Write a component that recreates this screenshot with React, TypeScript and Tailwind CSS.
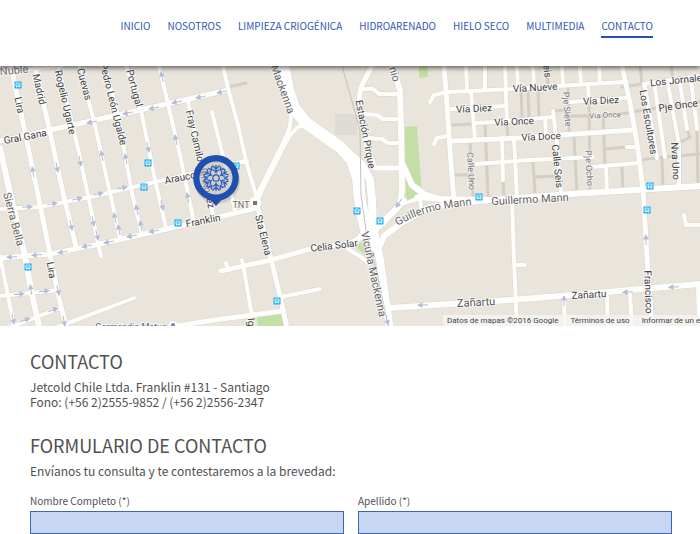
import React from 'react';

type Road = [width: number, points: string];
type Arrow = [x: number, y: number, angle: number];

interface MapLabel {
    text: string;
    x: number;
    y: number;
    angle: number;
    size?: number;
    color?: string;
}

const navItems = [
    { label: 'INICIO', href: '#inicio' },
    { label: 'NOSOTROS', href: '#nosotros' },
    { label: 'LIMPIEZA CRIOGÉNICA', href: '#limpieza' },
    { label: 'HIDROARENADO', href: '#hidroarenado' },
    { label: 'HIELO SECO', href: '#hielo-seco' },
    { label: 'MULTIMEDIA', href: '#multimedia' },
    { label: 'CONTACTO', href: '#contacto', active: true },
];

// Passages, drawn below the streets
const lanes: Road[] = [
    [3, '228,87 246,83'],
    [3, '452,125 472,124'],
    [3, '485,124 488,196'],
    [3, '455,175 472,175'],
    [3, '470,142 473,197'],
    [3, '521,90 522,117'],
    [3, '507,123 508,138'],
    [3, '503,180 504,197'],
    [3, '568,86 569,133'],
    [3, '553,111 569,110'],
    [3, '568,116 590,116 628,113'],
    [3, '589,103 590,190'],
    [3, '603,115 605,166'],
    [3, '574,136 577,193'],
    [3, '533,162 535,193'],
    [3, '535,177 556,176'],
    [3, '622,167 623,190'],
    [3, '605,149 627,147'],
    [3, '528,90 529,117'],
    [3, '538,90 539,117'],
    [3, '547,66 548,87'],
    [3, '622,87 642,84 640,66'],
    [3, '671,66 673,79'],
    [3, '632,112 655,108 700,102'],
    [3, '640,160 665,157 700,154'],
    [3, '662,160 663,188'],
    [3, '687,130 690,137 679,143'],
    [3, '697,130 698,186'],
];

const streets: Road[] = [
    [4, '0,72 30,69 62,66'],
    [5, '11,66 25,132 38,195 50,254 57,290 66,326'],
    [5, '35,66 50,132 63,193 76,247'],
    [4, '58,66 75,135 88,195 98,243 101,256'],
    [4, '79,66 94,121 110,193 120,238'],
    [4, '105,66 118,116 132,193 142,234'],
    [4, '126,66 141,110 155,180 166,228'],
    [4, '159,66 168,104 180,155 194,222'],
    [5, '0,141 50,130 118,115 180,101 228,90'],
    [4, '0,209 40,207 90,197 155,182 207,170'],
    [5, '0,258 25,256 50,254 100,244 180,226 257,208'],
    [6, '0,148 10,193 25,256 31,290 39,326'],
    [4, '0,256 14,326'],
    [4, '0,296 31,293 57,290'],
    [4, '8,328 60,308'],
    [4, '55,328 134,298'],
    [4, '223,66 228,88 238,125 247,165 256,195 258,208'],
    [4, '188,101 197,145 208,190 213,215'],
    [4, '212,112 224,160 235,211'],
    [4, '236,163 247,161'],
    [4, '291,114 290,127 281,147 257,195 256,203'],
    [4, '306,125 298,127 290,135 282,150 262,190 256,205'],
    [5, '258,208 271,259 281,300 287,328'],
    [5, '221,271 271,260 310,249 350,243 364,236'],
    [4, '226,263 228,269'],
    [4, '242,260 244,270 252,316'],
    [4, '281,297 320,289'],
    [5, '170,327 215,320 283,311'],
    [5, '372,66 361,87 359,100 362,118 366,145 375,168 402,168'],
    [4, '361,89 373,89 379,94 400,94'],
    [4, '365,114 377,115 383,119 400,119'],
    [4, '369,138 382,139 388,143 401,143'],
    [6, '392,66 400,90 401,130 402,190 400,205 384,222 374,231'],
    [5, '444,66 447,105 450,150 454,202'],
    [4, '447,92 434,95 430,102'],
    [4, '447,136 437,138 434,144'],
    [4, '447,92 513,89 557,86 623,82'],
    [4, '451,109 505,106'],
    [4, '475,123 495,122 533,119 553,117'],
    [5, '451,141 520,138 560,135 633,130'],
    [4, '475,164 530,160 593,157'],
    [4, '592,167 638,163'],
    [4, '466,66 467,90'],
    [4, '485,66 485,89'],
    [4, '471,92 475,139'],
    [4, '505,66 507,123'],
    [4, '502,138 503,180'],
    [4, '514,138 517,198'],
    [4, '517,66 518,88'],
    [4, '533,66 534,86'],
    [4, '562,66 563,85'],
    [4, '580,66 581,84'],
    [4, '599,66 600,82'],
    [4, '588,84 589,101'],
    [4, '570,102 625,98'],
    [4, '553,111 557,145 561,194'],
    [4, '545,119 546,134'],
    [4, '627,147 637,147'],
    [4, '606,167 607,192'],
    [5, '622,66 630,103 637,143 643,190 648,273 652,328'],
    [4, '645,88 644,84 700,76'],
    [4, '645,87 657,158'],
    [4, '655,88 665,157'],
    [4, '668,84 679,145 679,187'],
    [4, '680,83 687,129'],
    [4, '691,81 697,129'],
    [4, '512,200 514,260 517,328'],
    [4, '516,265 525,265'],
    [6, '389,308 450,304 510,300 560,296 700,284'],
    [4, '564,298 565,328'],
    [4, '607,296 608,328'],
    [4, '630,294 632,328'],
    [4, '698,286 699,328'],
    [4, '684,215 686,225 700,225'],
    [4, '453,190 454,200'],
    [4, '420,196 421,209'],
];

const avenues: Road[] = [
    [12, '283,62 288,90 294,108 306,123 340,147 352,160 358,178 360,200 365,226 376,246'],
    [8, '345,150 362,165 370,180 372,200 373,226 380,260 390,330'],
    [6, '403,165 412,185 424,194 440,199 490,200 570,194 700,186'],
    [6, '374,230 392,213 403,202 420,197 440,199'],
    [6, '378,250 384,236 400,224 430,207 460,203 490,200'],
    [4, '348,249 361,257 369,264'],
    [4, '355,243 364,230'],
];

const arrows: Arrow[] = [
    [33, 172, -100], [57, 167, 78], [80, 161, 78], [102, 156, -102], [126, 159, -102],
    [148, 147, 78], [162, 77, -102], [176, 140, -102], [92, 122, 168], [128, 113, 168],
    [154, 108, 168], [177, 102, 168], [122, 188, -12], [98, 194, -12], [27, 207, -3],
    [52, 204, -10], [77, 199, -12], [71, 225, 78], [93, 221, 78], [97, 235, 78],
    [115, 218, -102], [119, 230, -102], [137, 210, -102], [141, 226, -102], [162, 205, 78],
    [12, 257, 177], [37, 255, 175], [63, 252, 170], [87, 246, 168], [109, 242, 168],
    [132, 236, 168], [154, 231, 168], [19, 294, -5], [44, 291, -5], [31, 290, -100],
    [58, 290, 78], [53, 310, -20], [25, 320, -20], [13, 319, 78], [64, 321, 78],
    [201, 97, 168], [222, 92, 168], [188, 198, -100], [423, 305, 177], [399, 203, 125],
    [646, 240, -92], [628, 292, 176], [674, 287, 176], [564, 301, -90], [387, 320, 78],
];

const stations = [
    [18, 85], [148, 163], [144, 187], [28, 267], [178, 223], [236, 166],
    [277, 301], [357, 211], [380, 221], [479, 197], [650, 186], [647, 210],
];

const labels: MapLabel[] = [
    { text: 'Ñuble', x: 14, y: 70, angle: -5, size: 11, color: '#777' },
    { text: 'Lira', x: 20, y: 105, angle: 78 },
    { text: 'Madrid', x: 40, y: 89, angle: 77 },
    { text: 'Rogelio Ugarte', x: 66, y: 102, angle: 77 },
    { text: 'Cuevas', x: 85, y: 84, angle: 75 },
    { text: 'Pedro León Ugalde', x: 114, y: 104, angle: 76 },
    { text: 'Portugal', x: 135, y: 88, angle: 75 },
    { text: 'Gral Gana', x: 25, y: 136, angle: -11 },
    { text: 'Arauco', x: 180, y: 177, angle: -11 },
    { text: 'Fray Camilo Henríquez', x: 201, y: 159, angle: 77 },
    { text: 'Franklin', x: 203, y: 220, angle: -11 },
    { text: 'Sta Elena', x: 264, y: 235, angle: 76 },
    { text: 'Sierra Bella', x: 14, y: 219, angle: 75, size: 11, color: '#666' },
    { text: 'Lira', x: 52, y: 270, angle: 80 },
    { text: 'Celia Solar', x: 334, y: 245, angle: -7 },
    { text: 'Iglesias', x: 253, y: 335, angle: 85 },
    { text: 'TNT', x: 241, y: 204, angle: 0, size: 9, color: '#707070' },
    { text: 'Vicuña Mackenna', x: 277, y: 72, angle: 70, size: 11, color: '#666' },
    { text: 'Estación Pirque', x: 366, y: 134, angle: 79 },
    { text: 'nio', x: 395, y: 74, angle: 74, size: 11, color: '#666' },
    { text: 'Vicuña Mackenna', x: 374, y: 274, angle: 78, size: 11, color: '#666' },
    { text: 'Guillermo Mann', x: 530, y: 199, angle: -3, size: 11, color: '#666' },
    { text: 'Zañartu', x: 476, y: 302, angle: -3, size: 11, color: '#555' },
    { text: 'Zañartu', x: 589, y: 294, angle: -3 },
    { text: 'Vía Nueve', x: 535, y: 87, angle: -3 },
    { text: 'Vía Diez', x: 474, y: 108, angle: -3 },
    { text: 'Vía Once', x: 514, y: 121, angle: -3 },
    { text: 'Vía Doce', x: 541, y: 136, angle: -3 },
    { text: 'Vía Diez', x: 601, y: 100, angle: -3 },
    { text: 'Vía Once', x: 605, y: 114, angle: -3, size: 8, color: '#777' },
    { text: 'Los Jornaleros', x: 683, y: 79, angle: -6 },
    { text: 'Pje Once', x: 678, y: 105, angle: -8 },
    { text: 'Los Escultores', x: 649, y: 122, angle: 80 },
    { text: 'Nva Uno', x: 676, y: 161, angle: 87 },
    { text: 'Calle Seis', x: 558, y: 166, angle: 84 },
    { text: 'eis', x: 548, y: 71, angle: 84 },
    { text: 'Calle Uno', x: 472, y: 171, angle: 87, size: 9, color: '#777' },
    { text: 'Pje Siete', x: 568, y: 109, angle: 86, size: 9, color: '#777' },
    { text: 'Pje Ocho', x: 590, y: 168, angle: 87, size: 9, color: '#777' },
    { text: 'Francisco', x: 649, y: 292, angle: 88 },
    { text: 'Garmendia Matus', x: 131, y: 326, angle: 0, size: 9, color: '#5a6199' },
];

const Lines: React.FC<{ roads: Road[]; color: string; extra?: number }> = ({ roads, color, extra = 0 }) => (
    <g fill="none" stroke={color} strokeLinecap="round" strokeLinejoin="round">
        {roads.map(([width, points], index) => (
            <polyline key={index} points={points} strokeWidth={width + extra} />
        ))}
    </g>
);

const Marker: React.FC = () => (
    <g transform="translate(216 178)">
        <ellipse cx="1" cy="3" rx="23" ry="23" fill="#000" opacity="0.12" />
        <circle r="18" fill="#d9d7d1" opacity="0.45" />
        <path
            d="M0 -23a23 23 0 0 1 5 45.400L0 28l-5 -5.600A23 23 0 0 1 0 -23ZM0 -16.500a16.500 16.500 0 1 0 0 33a16.500 16.500 0 1 0 0 -33Z"
            fill="#1f4faf"
            fillRule="evenodd"
        />
        <g fill="none" stroke="#2f5fc0" strokeWidth="1.300">
            <circle r="3.200" />
            {[0, 60, 120, 180, 240, 300].map((angle) => (
                <g key={angle} transform={`rotate(${angle})`}>
                    <path d="M0 -4.500V-13M-3 -8.500L0 -6L3 -8.500M-3.500 -12.500L0 -9L3.500 -12.500" />
                    <path d="M4.500 -11.500L4.500 -7.800L8 -9.500" strokeWidth="1.600" />
                </g>
            ))}
        </g>
    </g>
);

const StreetMap: React.FC = () => (
    <svg
        viewBox="0 66 700 260"
        preserveAspectRatio="xMidYMid slice"
        className="block w-full h-65 font-[Roboto,sans-serif]"
        role="img"
        aria-label="Mapa de Franklin #131, Santiago"
    >
        <rect x="0" y="66" width="700" height="260" fill="#e9e5dc" />
        <rect x="335" y="114" width="22" height="21" fill="#dedbd4" />
        <path d="M405 127L417 126L422 194L416 199L406 203Z" fill="#c3dfa6" />
        <path d="M419 66H427L428 77L419 78Z" fill="#c3dfa6" />
        <path d="M257 317L283 314L286 326H258Z" fill="#c3dfa6" />

        <Lines roads={lanes} color="#d3cfc3" />
        <Lines roads={streets} color="#dad6cc" extra={1} />
        <Lines roads={avenues} color="#dad6cc" extra={1} />
        <Lines roads={streets} color="#fdfdfb" />
        <Lines roads={avenues} color="#ffffff" />
        <path d="M355 246L364 241L366 256Z" fill="#c3dfa6" />
        <path d="M405 193L414 192L415 197L407 201Z" fill="#c3dfa6" />

        {/* railway */}
        <path d="M342 66L355 112L360 130L361 195L366 230L379 282L388 326" fill="none" stroke="#c2c1bf" />

        {arrows.map(([x, y, angle]) => (
            <path
                key={`${x}-${y}`}
                d="M-5 0H4M1 -2L5 0L1 2Z"
                transform={`translate(${x} ${y}) rotate(${angle})`}
                fill="#b5bdd6"
                stroke="#b5bdd6"
            />
        ))}

        {stations.map(([x, y]) => (
            <g key={`${x}-${y}`} transform={`translate(${x} ${y})`}>
                <rect x="-3.500" y="-3.500" width="7" height="7" fill="#15aef0" />
                <path d="M-2 -2H2V1.500H-2ZM-2 0H2M-1.500 2.500V2M1.500 2.500V2" fill="none" stroke="#fff" strokeWidth="0.800" />
            </g>
        ))}

        <circle cx="255" cy="203" r="6" fill="#fff" />
        <rect x="253" y="201" width="4" height="4" fill="#7d716c" />
        <circle cx="173" cy="325" r="4" fill="#fff" />
        <circle cx="173" cy="325" r="2" fill="#7d84b8" />

        <g textAnchor="middle" stroke="#fff" strokeOpacity="0.6" strokeWidth="2" paintOrder="stroke">
            {labels.map(({ text, x, y, angle, size = 10, color = '#404040' }) => (
                <text
                    key={`${text}-${x}`}
                    transform={`translate(${x} ${y}) rotate(${angle})`}
                    dy="4"
                    fontSize={size}
                    fill={color}
                >
                    {text}
                </text>
            ))}
        </g>
        <path id="mann" d="M398 226Q425 208 476 205" fill="none" />
        <text fontSize="11" fill="#666" stroke="#fff" strokeOpacity="0.6" strokeWidth="2" paintOrder="stroke">
            <textPath href="#mann">Guillermo Mann</textPath>
        </text>

        <Marker />
    </svg>
);

const Header: React.FC = () => (
    <header className="relative z-10 h-[66px] bg-white shadow-[0_2px_5px_rgba(0,0,0,0.6)]">
        <nav className="flex justify-end gap-[17px] pt-4 pr-[47px] text-[10px] leading-5 text-[#2f58b4] whitespace-nowrap">
            {navItems.map(({ label, href, active }) => (
                <a
                    key={label}
                    href={href}
                    aria-current={active ? 'page' : undefined}
                    className={active ? 'border-b-2 border-[#2850ad]' : 'border-b-2 border-transparent'}
                >
                    {label}
                </a>
            ))}
        </nav>
    </header>
);

const Field: React.FC<{ id: string; label: string }> = ({ id, label }) => (
    <div>
        <label htmlFor={id} className="block text-[10px] leading-5">{label}</label>
        <input
            id={id}
            name={id}
            type="text"
            className="block w-full h-[23px] px-2 text-xs border border-[#3d66b8] bg-[#c7d6f1] outline-none"
        />
    </div>
);

const App: React.FC = () => (
    <div className="bg-white text-[#505050] font-['Noto_Sans_CJK_SC',sans-serif] overflow-hidden">
        <Header />
        <section className="relative overflow-hidden">
            <StreetMap />
            <div className="absolute bottom-0 right-0 w-[257px] h-[11px] pl-1 flex gap-3 overflow-hidden whitespace-nowrap bg-[#f5f5f5]/75 font-[Roboto,sans-serif] text-[8px] leading-[11px] text-[#444]">
                <span>Datos de mapas ©2016 Google</span>
                <a href="#terminos">Términos de uso</a>
                <a href="#informar">Informar de un error de Maps</a>
            </div>
        </section>
        <main className="pl-[30px] pr-7 pt-[19px]">
            <h1 className="text-lg leading-8">CONTACTO</h1>
            <p className="mt-0.5 text-xs leading-[15px]">
                Jetcold Chile Ltda. Franklin #131 - Santiago
                <br />
                Fono: (+56 2)2555-9852 / (+56 2)2556-2347
            </p>
            <h2 className="mt-5 text-lg leading-8">FORMULARIO DE CONTACTO</h2>
            <p className="mt-0.5 text-xs leading-[15px]">Envíanos tu consulta y te contestaremos a la brevedad:</p>
            <form className="mt-[13px] grid grid-cols-2 gap-3.5">
                <Field id="nombre" label="Nombre Completo (*)" />
                <Field id="apellido" label="Apellido (*)" />
            </form>
        </main>
    </div>
);

export default App;
